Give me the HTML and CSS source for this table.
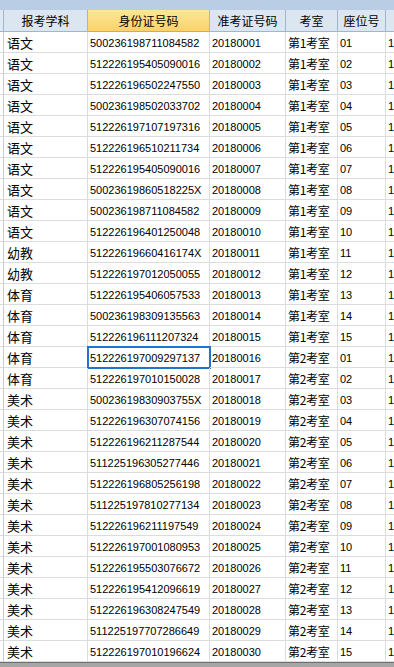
FILE: index.html
```html
<!DOCTYPE html>
<html lang="zh-CN">
<head>
<meta charset="utf-8">
<title>考生名单</title>
<link rel="stylesheet" href="styles.css">
</head>
<body>
<div class="topbar"></div>
<div class="sheet">
  <div class="hd corner"></div>
  <div class="hd">报考学科</div>
  <div class="hd sel">身份证号码</div>
  <div class="hd">准考证号码</div>
  <div class="hd">考室</div>
  <div class="hd">座位号</div>
  <div class="hd last"></div>

  <div class="c rh"></div><div class="c cn">语文</div><div class="c num">500236198711084582</div><div class="c num">20180001</div><div class="c rm">第1考室</div><div class="c num">01</div><div class="c num last">1</div>
  <div class="c rh"></div><div class="c cn">语文</div><div class="c num">512226195405090016</div><div class="c num">20180002</div><div class="c rm">第1考室</div><div class="c num">02</div><div class="c num last">1</div>
  <div class="c rh"></div><div class="c cn">语文</div><div class="c num">512226196502247550</div><div class="c num">20180003</div><div class="c rm">第1考室</div><div class="c num">03</div><div class="c num last">1</div>
  <div class="c rh"></div><div class="c cn">语文</div><div class="c num">500236198502033702</div><div class="c num">20180004</div><div class="c rm">第1考室</div><div class="c num">04</div><div class="c num last">1</div>
  <div class="c rh"></div><div class="c cn">语文</div><div class="c num">512226197107197316</div><div class="c num">20180005</div><div class="c rm">第1考室</div><div class="c num">05</div><div class="c num last">1</div>
  <div class="c rh"></div><div class="c cn">语文</div><div class="c num">512226196510211734</div><div class="c num">20180006</div><div class="c rm">第1考室</div><div class="c num">06</div><div class="c num last">1</div>
  <div class="c rh"></div><div class="c cn">语文</div><div class="c num">512226195405090016</div><div class="c num">20180007</div><div class="c rm">第1考室</div><div class="c num">07</div><div class="c num last">1</div>
  <div class="c rh"></div><div class="c cn">语文</div><div class="c num">50023619860518225X</div><div class="c num">20180008</div><div class="c rm">第1考室</div><div class="c num">08</div><div class="c num last">1</div>
  <div class="c rh"></div><div class="c cn">语文</div><div class="c num">500236198711084582</div><div class="c num">20180009</div><div class="c rm">第1考室</div><div class="c num">09</div><div class="c num last">1</div>
  <div class="c rh"></div><div class="c cn">语文</div><div class="c num">512226196401250048</div><div class="c num">20180010</div><div class="c rm">第1考室</div><div class="c num">10</div><div class="c num last">1</div>
  <div class="c rh"></div><div class="c cn">幼教</div><div class="c num">51222619660416174X</div><div class="c num">20180011</div><div class="c rm">第1考室</div><div class="c num">11</div><div class="c num last">1</div>
  <div class="c rh"></div><div class="c cn">幼教</div><div class="c num">512226197012050055</div><div class="c num">20180012</div><div class="c rm">第1考室</div><div class="c num">12</div><div class="c num last">1</div>
  <div class="c rh"></div><div class="c cn">体育</div><div class="c num">512226195406057533</div><div class="c num">20180013</div><div class="c rm">第1考室</div><div class="c num">13</div><div class="c num last">1</div>
  <div class="c rh"></div><div class="c cn">体育</div><div class="c num">500236198309135563</div><div class="c num">20180014</div><div class="c rm">第1考室</div><div class="c num">14</div><div class="c num last">1</div>
  <div class="c rh"></div><div class="c cn">体育</div><div class="c num">512226196111207324</div><div class="c num">20180015</div><div class="c rm">第1考室</div><div class="c num">15</div><div class="c num last">1</div>
  <div class="c rh"></div><div class="c cn">体育</div><div class="c num active">512226197009297137</div><div class="c num">20180016</div><div class="c rm">第2考室</div><div class="c num">01</div><div class="c num last">1</div>
  <div class="c rh"></div><div class="c cn">体育</div><div class="c num">512226197010150028</div><div class="c num">20180017</div><div class="c rm">第2考室</div><div class="c num">02</div><div class="c num last">1</div>
  <div class="c rh"></div><div class="c cn">美术</div><div class="c num">50023619830903755X</div><div class="c num">20180018</div><div class="c rm">第2考室</div><div class="c num">03</div><div class="c num last">1</div>
  <div class="c rh"></div><div class="c cn">美术</div><div class="c num">512226196307074156</div><div class="c num">20180019</div><div class="c rm">第2考室</div><div class="c num">04</div><div class="c num last">1</div>
  <div class="c rh"></div><div class="c cn">美术</div><div class="c num">512226196211287544</div><div class="c num">20180020</div><div class="c rm">第2考室</div><div class="c num">05</div><div class="c num last">1</div>
  <div class="c rh"></div><div class="c cn">美术</div><div class="c num">511225196305277446</div><div class="c num">20180021</div><div class="c rm">第2考室</div><div class="c num">06</div><div class="c num last">1</div>
  <div class="c rh"></div><div class="c cn">美术</div><div class="c num">512226196805256198</div><div class="c num">20180022</div><div class="c rm">第2考室</div><div class="c num">07</div><div class="c num last">1</div>
  <div class="c rh"></div><div class="c cn">美术</div><div class="c num">511225197810277134</div><div class="c num">20180023</div><div class="c rm">第2考室</div><div class="c num">08</div><div class="c num last">1</div>
  <div class="c rh"></div><div class="c cn">美术</div><div class="c num">512226196211197549</div><div class="c num">20180024</div><div class="c rm">第2考室</div><div class="c num">09</div><div class="c num last">1</div>
  <div class="c rh"></div><div class="c cn">美术</div><div class="c num">512226197001080953</div><div class="c num">20180025</div><div class="c rm">第2考室</div><div class="c num">10</div><div class="c num last">1</div>
  <div class="c rh"></div><div class="c cn">美术</div><div class="c num">512226195503076672</div><div class="c num">20180026</div><div class="c rm">第2考室</div><div class="c num">11</div><div class="c num last">1</div>
  <div class="c rh"></div><div class="c cn">美术</div><div class="c num">512226195412096619</div><div class="c num">20180027</div><div class="c rm">第2考室</div><div class="c num">12</div><div class="c num last">1</div>
  <div class="c rh"></div><div class="c cn">美术</div><div class="c num">512226196308247549</div><div class="c num">20180028</div><div class="c rm">第2考室</div><div class="c num">13</div><div class="c num last">1</div>
  <div class="c rh"></div><div class="c cn">美术</div><div class="c num">511225197707286649</div><div class="c num">20180029</div><div class="c rm">第2考室</div><div class="c num">14</div><div class="c num last">1</div>
  <div class="c rh"></div><div class="c cn">美术</div><div class="c num">512226197010196624</div><div class="c num">20180030</div><div class="c rm">第2考室</div><div class="c num">15</div><div class="c num last">1</div>
</div>
<div class="bottombar"></div>
</body>
</html>
```

FILE: styles.css
```css
html, body {
  margin: 0;
  padding: 0;
  background: #ffffff;
  overflow: hidden;
}
body {
  width: 394px;
  height: 667px;
  font-family: "Liberation Sans", "Noto Sans CJK SC", sans-serif;
  color: #000;
}
.topbar {
  height: 10px;
  background: #b9cde5;
}
.sheet {
  display: grid;
  grid-template-columns: 4px 84px 122px 76px 52px 48px 1fr;
  grid-auto-rows: 21px;
  grid-template-rows: 22px;
}
.hd {
  box-sizing: border-box;
  background: #dce6f1;
  border-right: 1px solid #9eb6ce;
  border-bottom: 1px solid #9eb6ce;
  font-family: "Noto Sans CJK SC", sans-serif;
  font-size: 12px;
  display: flex;
  align-items: center;
  justify-content: center;
  white-space: nowrap;
  overflow: hidden;
}
.hd.sel {
  background: linear-gradient(#fde59a, #f9d36a);
  border-right-color: #e2b24e;
  border-bottom-color: #e2a93a;
}
.hd.corner {
  background: #dfe8f3;
}
.hd.last {
  border-right: none;
}
.c {
  box-sizing: border-box;
  border-right: 1px solid #dadcdd;
  border-bottom: 1px solid #dadcdd;
  display: flex;
  align-items: center;
  padding-top: 1px;
  white-space: nowrap;
  overflow: hidden;
}
.c.rh {
  border-right-color: #c9cbcd;
}
.cn {
  font-family: "Noto Sans CJK SC", sans-serif;
  font-size: 13px;
  padding-left: 3px;
}
.rm {
  font-family: "Noto Sans CJK SC", sans-serif;
  font-size: 12px;
  padding-left: 2px;
  letter-spacing: -0.3px;
}
.num {
  font-size: 11px;
  padding-left: 2px;
}
.c.last {
  border-right: none;
}
.active {
  outline: 2px solid #1e74cf;
  outline-offset: -1px;
}
.bottombar {
  height: 5px;
  border-top: 1px solid #6f6f6f;
  background: #a6a6a6;
}
```
